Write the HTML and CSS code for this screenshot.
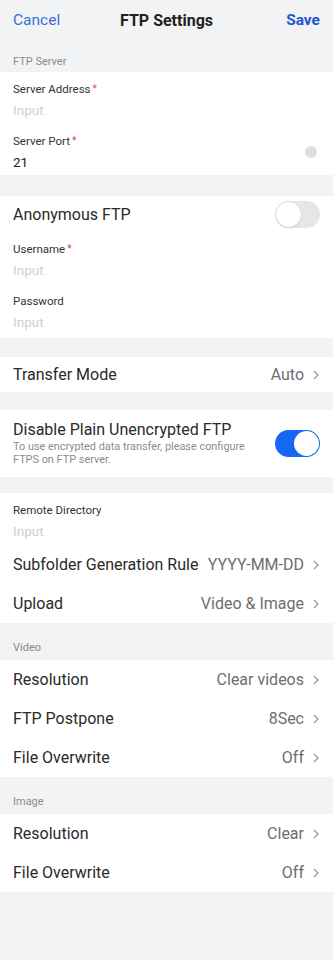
FILE: index.html
```html
<!DOCTYPE html>
<html lang="en">
<head>
    <meta charset="UTF-8">
    <meta name="viewport" content="width=device-width, initial-scale=1.0">
    <title>FTP Settings</title>
    <link rel="stylesheet" href="styles.css">
</head>
<body>
    <div class="page">
        <div class="topbar">
            <span class="cancel">Cancel</span>
            <h1>FTP Settings</h1>
            <span class="save">Save</span>
        </div>

        <div class="section-title first">FTP Server</div>
        <div class="card">
            <div class="field">
                <div class="field-main">
                    <div class="field-label">Server Address<i>*</i></div>
                    <div class="field-input placeholder">Input</div>
                </div>
            </div>
            <div class="field short">
                <div class="field-main">
                    <div class="field-label">Server Port<i>*</i></div>
                    <div class="field-input">21</div>
                </div>
                <span class="dot"></span>
            </div>
        </div>

        <div class="card gap-21 pad-bottom">
            <div class="row switch-row">
                <span class="row-title">Anonymous FTP</span>
                <span class="switch"></span>
            </div>
            <div class="field">
                <div class="field-main">
                    <div class="field-label">Username<i>*</i></div>
                    <div class="field-input placeholder">Input</div>
                </div>
            </div>
            <div class="field">
                <div class="field-main">
                    <div class="field-label">Password</div>
                    <div class="field-input placeholder">Input</div>
                </div>
            </div>
        </div>

        <div class="card gap-19">
            <div class="row short">
                <span class="row-title">Transfer Mode</span>
                <span class="row-value">Auto <svg class="chev" viewBox="0 0 6 10"><polyline points="1,1 5,5 1,9"/></svg></span>
            </div>
        </div>

        <div class="card gap-18">
            <div class="row tall">
                <div class="row-text">
                    <div class="row-title">Disable Plain Unencrypted FTP</div>
                    <div class="row-desc">To use encrypted data transfer, please configure FTPS on FTP server.</div>
                </div>
                <span class="switch on"></span>
            </div>
        </div>

        <div class="card gap-16">
            <div class="field">
                <div class="field-main">
                    <div class="field-label">Remote Directory</div>
                    <div class="field-input placeholder">Input</div>
                </div>
            </div>
            <div class="row">
                <span class="row-title">Subfolder Generation Rule</span>
                <span class="row-value">YYYY-MM-DD <svg class="chev" viewBox="0 0 6 10"><polyline points="1,1 5,5 1,9"/></svg></span>
            </div>
            <div class="row">
                <span class="row-title">Upload</span>
                <span class="row-value">Video &amp; Image <svg class="chev" viewBox="0 0 6 10"><polyline points="1,1 5,5 1,9"/></svg></span>
            </div>
        </div>

        <div class="section-title">Video</div>
        <div class="card">
            <div class="row">
                <span class="row-title">Resolution</span>
                <span class="row-value">Clear videos <svg class="chev" viewBox="0 0 6 10"><polyline points="1,1 5,5 1,9"/></svg></span>
            </div>
            <div class="row">
                <span class="row-title">FTP Postpone</span>
                <span class="row-value">8Sec <svg class="chev" viewBox="0 0 6 10"><polyline points="1,1 5,5 1,9"/></svg></span>
            </div>
            <div class="row">
                <span class="row-title">File Overwrite</span>
                <span class="row-value">Off <svg class="chev" viewBox="0 0 6 10"><polyline points="1,1 5,5 1,9"/></svg></span>
            </div>
        </div>

        <div class="section-title">Image</div>
        <div class="card">
            <div class="row">
                <span class="row-title">Resolution</span>
                <span class="row-value">Clear <svg class="chev" viewBox="0 0 6 10"><polyline points="1,1 5,5 1,9"/></svg></span>
            </div>
            <div class="row">
                <span class="row-title">File Overwrite</span>
                <span class="row-value">Off <svg class="chev" viewBox="0 0 6 10"><polyline points="1,1 5,5 1,9"/></svg></span>
            </div>
        </div>
    </div>
</body>
</html>
```

FILE: styles.css
```css
body {
    margin: 0;
    font-family: Roboto, "Noto Sans", Arial, sans-serif;
    background-color: #f2f3f5;
    color: #2a2a2a;
}

.page {
    min-height: 960px;
    background-color: #f2f3f5;
}

.topbar {
    height: 40px;
    display: grid;
    grid-template-columns: 1fr auto 1fr;
    align-items: center;
    padding: 0 13px;
}

.topbar h1 {
    margin: 0;
    font-size: 16px;
    font-weight: 700;
    color: #222;
}

.cancel {
    font-size: 15.5px;
    color: #3a6fd6;
}

.save {
    justify-self: end;
    font-size: 15.5px;
    font-weight: 700;
    color: #1f55d0;
}

.section-title {
    font-size: 11px;
    line-height: 14px;
    color: #8a8a8a;
    padding: 18px 13px 5px;
}

.section-title.first {
    padding: 15px 13px 3px;
}

.card {
    background-color: #fff;
}

.gap-21 { margin-top: 21px; }
.gap-19 { margin-top: 19px; }
.gap-18 { margin-top: 18px; }
.gap-16 { margin-top: 16px; }

.pad-bottom {
    padding-bottom: 2px;
}

.field {
    display: flex;
    align-items: flex-start;
    height: 52px;
    padding: 9px 14px 0 13px;
    box-sizing: border-box;
}

.field.short {
    height: 51px;
}

.field-main {
    flex: 1;
}

.field-label {
    font-size: 11.5px;
    line-height: 16px;
    color: #333;
}

.field-label i {
    font-style: normal;
    color: #e0454b;
    margin-left: 2px;
    font-size: 10px;
    vertical-align: top;
}

.field-input {
    font-size: 13.5px;
    line-height: 20px;
    margin-top: 3px;
    color: #222;
}

.field-input.placeholder {
    color: #cfcfcf;
}

.dot {
    align-self: center;
    width: 12px;
    height: 12px;
    border-radius: 50%;
    background-color: #dedede;
    margin-top: -4px;
    margin-right: 2px;
}

.row {
    display: flex;
    align-items: center;
    justify-content: space-between;
    height: 39px;
    padding: 0 14px 0 13px;
}

.row.short {
    height: 35px;
}

.row.switch-row {
    height: 36px;
}

.row.tall {
    height: 67px;
    align-items: flex-start;
    padding-top: 10px;
    box-sizing: border-box;
}

.row-title {
    font-size: 16px;
    color: #2a2a2a;
    white-space: nowrap;
}

.row-desc {
    font-size: 10.9px;
    line-height: 13px;
    color: #8c8c8c;
    margin-top: 1px;
    width: 245px;
}

.row-value {
    display: flex;
    align-items: center;
    gap: 6px;
    font-size: 16px;
    color: #6e6e6e;
    white-space: nowrap;
}

.chev {
    width: 6px;
    height: 10px;
    fill: none;
    stroke: #9a9a9a;
    stroke-width: 1.3;
    margin-left: 3px;
}

.switch {
    position: relative;
    width: 45px;
    height: 27px;
    border-radius: 14px;
    background-color: #e6e6e6;
    flex-shrink: 0;
    margin-right: -1px;
}

.switch::after {
    content: "";
    position: absolute;
    top: 1px;
    left: 1px;
    width: 25px;
    height: 25px;
    border-radius: 50%;
    background-color: #fff;
    box-shadow: 0 0 0 0.5px #d6d6d6, 0 1px 2px rgba(0, 0, 0, 0.12);
}

.switch.on {
    background-color: #1668f4;
    margin-top: 10px;
}

.switch.on::after {
    left: 19px;
    box-shadow: none;
}
```
